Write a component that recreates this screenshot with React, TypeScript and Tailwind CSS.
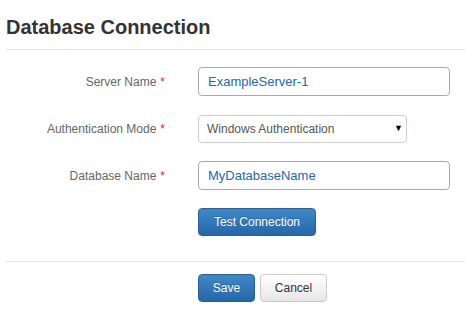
import { useState } from "react";

const labelCls = "w-[159px] shrink-0 text-right text-[12px] text-[#666]";

function Required() {
  return <span className="text-[#c9302c] ml-[4px]">*</span>;
}

export default function App() {
  const [server, setServer] = useState("ExampleServer-1");
  const [auth, setAuth] = useState("Windows Authentication");
  const [dbName, setDbName] = useState("MyDatabaseName");

  return (
    <div className="w-[465px] h-[309px] bg-white pl-[6px] font-['Liberation_Sans',Arial,sans-serif] overflow-hidden">
      {/* Header */}
      <h1 className="mt-[16px] mb-[11px] text-[20px] leading-[22px] font-bold text-[#333]">
        Database Connection
      </h1>
      <div className="border-t border-[#e5e5e5]" />

      {/* Form */}
      <div className="flex flex-col">
        <div className="flex items-center mt-[17px]">
          <label className={labelCls}>
            Server Name<Required />
          </label>
          <input
            value={server}
            onChange={(e) => setServer(e.target.value)}
            className="ml-[33px] w-[252px] h-[29px] border border-[#aaa] rounded-[4px] px-[9px] text-[13px] text-[#2368b3] outline-none"
          />
        </div>

        <div className="flex items-center mt-[19px]">
          <label className={labelCls}>
            Authentication Mode<Required />
          </label>
          <div className="relative ml-[33px]">
            <select
              value={auth}
              onChange={(e) => setAuth(e.target.value)}
              className="appearance-none w-[209px] h-[28px] border border-[#ccc] rounded-[4px] pl-[8px] text-[12px] text-[#555] bg-white outline-none"
            >
              <option>Windows Authentication</option>
              <option>SQL Server Authentication</option>
            </select>
            <span className="absolute right-[4px] top-[7px] text-[9px] text-black pointer-events-none">▼</span>
          </div>
        </div>

        <div className="flex items-center mt-[18px]">
          <label className={labelCls}>
            Database Name<Required />
          </label>
          <input
            value={dbName}
            onChange={(e) => setDbName(e.target.value)}
            className="ml-[33px] w-[252px] h-[29px] border border-[#aaa] rounded-[4px] px-[9px] text-[13px] text-[#2368b3] outline-none"
          />
        </div>

        <div className="flex mt-[18px] pl-[192px]">
          <button className="h-[28px] w-[118px] rounded-[4px] border border-[#2a5f96] bg-gradient-to-b from-[#3f89c9] to-[#2766a7] text-white text-[12px] [text-shadow:0_-1px_0_rgba(0,0,0,0.2)]">
            Test Connection
          </button>
        </div>
      </div>

      <div className="border-t border-[#e5e5e5] mt-[25px]" />

      {/* Actions */}
      <div className="flex gap-[5px] mt-[12px] pl-[192px]">
        <button className="h-[28px] w-[57px] rounded-[4px] border border-[#2a5f96] bg-gradient-to-b from-[#3f89c9] to-[#2766a7] text-white text-[12px] [text-shadow:0_-1px_0_rgba(0,0,0,0.2)]">
          Save
        </button>
        <button className="h-[28px] w-[67px] rounded-[4px] border border-[#ccc] bg-gradient-to-b from-white to-[#e6e6e6] text-[#333] text-[12px]">
          Cancel
        </button>
      </div>
    </div>
  );
}
